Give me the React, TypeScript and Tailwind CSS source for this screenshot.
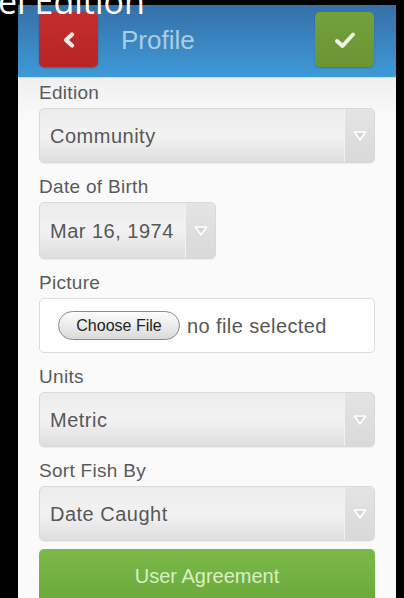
import type { ReactNode } from 'react';

const font = { fontFamily: '"Liberation Sans", Arial, sans-serif' };

function Caret() {
  return (
    <svg width="14" height="12" viewBox="0 0 14 12" className="shrink-0">
      <path
        d="M1.5 2 L12.5 2 L7 10 Z"
        fill="#d4d4d4"
        stroke="#ffffff"
        strokeWidth="1.6"
        strokeLinejoin="round"
      />
    </svg>
  );
}

function Field({ label, children }: { label: string; children: ReactNode }) {
  return (
    <div className="flex flex-col">
      <label className="h-[20px] text-[19px] leading-[20px] tracking-[0.3px] text-[#5a5a5a]">
        {label}
      </label>
      <div className="mt-[5px]">{children}</div>
    </div>
  );
}

function Select({
  value,
  className,
}: {
  value: string;
  className: string;
}) {
  return (
    <div
      className={`flex items-stretch overflow-hidden rounded-[5px] border border-[#d9d9d9] bg-gradient-to-b from-[#ececec] via-[#f2f2f2] to-[#dedede] shadow-[0_1px_1px_rgba(0,0,0,0.06)] ${className}`}
    >
      <div className="flex flex-1 items-center pl-[10px] text-[20px] tracking-[0.5px] text-[#575757]">
        {value}
      </div>
      <div className="flex w-[30px] items-center justify-center border-l border-[#f2f2f2] bg-gradient-to-b from-[#e4e4e4] to-[#d9d9d9]">
        <Caret />
      </div>
    </div>
  );
}

export default function App() {
  return (
    <div className="relative h-[598px] w-[404px] overflow-hidden bg-black" style={font}>
      <div className="ml-[18px] mt-[5px] flex w-[378px] flex-col">
        {/* header */}
        <div className="flex h-[72px] items-start justify-between bg-gradient-to-b from-[#3670a8] to-[#3e9ad8] px-[21px] pr-[22px] pt-[7px]">
          <div className="flex items-center">
            <button className="flex h-[55px] w-[59px] items-center justify-center rounded-[5px] bg-gradient-to-b from-[#c42d2d] to-[#b72525] shadow-[0_1px_2px_rgba(0,0,0,0.25)]">
              <svg width="14" height="16" viewBox="0 0 14 16">
                <path
                  d="M10 2.5 L4 8 L10 13.5"
                  fill="none"
                  stroke="#f4eaea"
                  strokeWidth="4.2"
                  strokeLinecap="round"
                  strokeLinejoin="round"
                />
              </svg>
            </button>
            <span className="ml-[23px] text-[26px] leading-none text-[#a9cde2]">
              Profile
            </span>
          </div>
          <button className="flex h-[55px] w-[59px] items-center justify-center rounded-[5px] bg-gradient-to-b from-[#72a03a] to-[#6a9634] shadow-[0_1px_2px_rgba(0,0,0,0.2)]">
            <svg width="22" height="18" viewBox="0 0 22 18">
              <path
                d="M3 10 L8.5 15 L19 3.5"
                fill="none"
                stroke="#eef2e6"
                strokeWidth="4"
                strokeLinecap="round"
                strokeLinejoin="round"
              />
            </svg>
          </button>
        </div>

        {/* form */}
        <div className="flex flex-col gap-[14px] border-t border-[#d8d8d8] bg-gradient-to-b from-[#efefef] to-[#fafafa] to-[40px] px-[21px] pr-[21px] pt-[5px]">
          <Field label="Edition">
            <Select value="Community" className="h-[55px] w-full" />
          </Field>
          <Field label="Date of Birth">
            <Select value="Mar 16, 1974" className="h-[57px] w-[177px]" />
          </Field>
          <Field label="Picture">
            <div className="flex h-[55px] items-center rounded-[5px] border border-[#dcdcdc] bg-white pl-[18px]">
              <button className="flex h-[29px] w-[122px] items-center justify-center rounded-full border border-[#8a8a8a] bg-gradient-to-b from-[#fdfdfd] to-[#dadada] text-[16px] text-[#222]">
                Choose File
              </button>
              <span className="ml-[7px] text-[20px] tracking-[0.4px] text-[#575757]">
                no file selected
              </span>
            </div>
          </Field>
          <Field label="Units">
            <Select value="Metric" className="h-[55px] w-full" />
          </Field>
          <Field label="Sort Fish By">
            <Select value="Date Caught" className="h-[55px] w-full" />
          </Field>
          <button className="-mt-[6px] flex h-[56px] items-center justify-center rounded-[5px] bg-gradient-to-b from-[#7cb94a] to-[#6aa83a] pb-[2px] text-[20px] text-[#d8f0c4]">
            User Agreement
          </button>
        </div>
      </div>

      {/* video caption overlay */}
      <div
        className="absolute left-[-2px] top-[-16px] whitespace-nowrap text-[34px] leading-none text-white"
        style={{ fontFamily: '"Open Sans", sans-serif' }}
      >
        el Edition
      </div>
    </div>
  );
}
